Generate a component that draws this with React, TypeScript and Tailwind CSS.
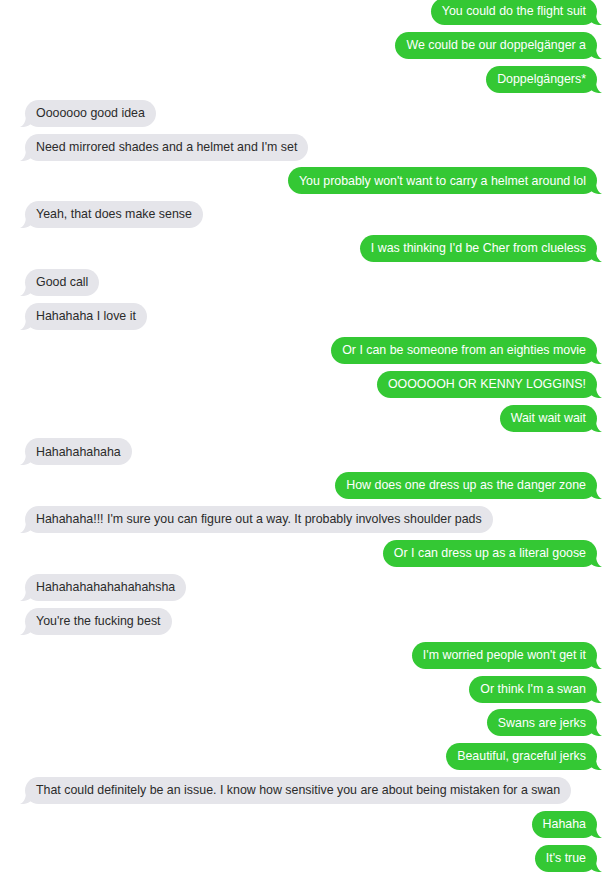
const MESSAGES: { me: boolean; text: string }[] = [
  { me: true, text: "You could do the flight suit" },
  { me: true, text: "We could be our doppelgänger a" },
  { me: true, text: "Doppelgängers*" },
  { me: false, text: "Ooooooo good idea" },
  { me: false, text: "Need mirrored shades and a helmet and I'm set" },
  { me: true, text: "You probably won't want to carry a helmet around lol" },
  { me: false, text: "Yeah, that does make sense" },
  { me: true, text: "I was thinking I'd be Cher from clueless" },
  { me: false, text: "Good call" },
  { me: false, text: "Hahahaha I love it" },
  { me: true, text: "Or I can be someone from an eighties movie" },
  { me: true, text: "OOOOOOH OR KENNY LOGGINS!" },
  { me: true, text: "Wait wait wait" },
  { me: false, text: "Hahahahahaha" },
  { me: true, text: "How does one dress up as the danger zone" },
  { me: false, text: "Hahahaha!!! I'm sure you can figure out a way. It probably involves shoulder pads" },
  { me: true, text: "Or I can dress up as a literal goose" },
  { me: false, text: "Hahahahahahahahahsha" },
  { me: false, text: "You're the fucking best" },
  { me: true, text: "I'm worried people won't get it" },
  { me: true, text: "Or think I'm a swan" },
  { me: true, text: "Swans are jerks" },
  { me: true, text: "Beautiful, graceful jerks" },
  { me: false, text: "That could definitely be an issue. I know how sensitive you are about being mistaken for a swan" },
  { me: true, text: "Hahaha" },
  { me: true, text: "It's true" },
];

function Tail({ me }: { me: boolean }) {
  // little curled tail at the bottom corner of each bubble
  return (
    <svg
      viewBox="0 0 12 12"
      className={`absolute bottom-0 w-[12px] h-[12px] ${
        me ? "right-[-5px] fill-[#34c834]" : "left-[-5px] -scale-x-100 fill-[#e5e5ea]"
      }`}
    >
      <path d="M0 0 L6 0 C6 6 8 10 12 12 C7 12.5 3 11 0 8 Z" />
    </svg>
  );
}

function Bubble({ me, text }: { me: boolean; text: string }) {
  return (
    <div className={`flex ${me ? "justify-end pr-[6px]" : "justify-start pl-[25px]"}`}>
      <div
        className={`relative h-[27px] rounded-[14px] px-[11px] flex items-center whitespace-nowrap text-[12.4px] ${
          me ? "bg-[#34c834] text-white" : "bg-[#e5e5ea] text-[#2b2b2b]"
        }`}
      >
        <Tail me={me} />
        <span className="relative">{text}</span>
      </div>
    </div>
  );
}

export default function App() {
  return (
    <div
      className="w-[603px] h-[877px] overflow-hidden bg-white"
      style={{ fontFamily: '"Liberation Sans", Arial, sans-serif' }}
    >
      <div className="flex flex-col gap-[6.88px] -mt-[2px]">
        {MESSAGES.map((m, i) => (
          <Bubble key={i} me={m.me} text={m.text} />
        ))}
      </div>
    </div>
  );
}
